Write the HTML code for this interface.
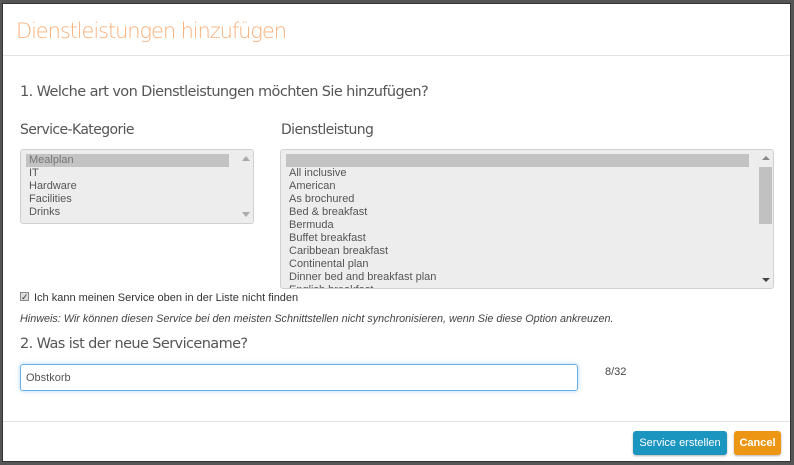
<!DOCTYPE html>
<html><head><style>
*{box-sizing:border-box;margin:0;padding:0}
body{width:794px;height:465px;background:#555;position:relative;overflow:hidden;font-family:"Liberation Sans",sans-serif}
.modal{position:absolute;left:2px;top:3px;width:789px;height:459px;background:#fff;border:1px solid #333}
.t{position:absolute;left:13px;top:15px;font-size:21px;color:#f8b07a;font-family:"DejaVu Sans","Liberation Sans",sans-serif;font-weight:300;letter-spacing:-1.1px}
.hl{position:absolute;left:0;right:0;height:1px;background:#e2e2e2}
.q{position:absolute;font-family:"DejaVu Sans","Liberation Sans",sans-serif;color:#555;font-size:14px;letter-spacing:-0.6px}
.box{position:absolute;background:#ededed;border:1px solid #d0d0d0;border-radius:3px;overflow:hidden;font-size:11px;color:#555;line-height:13px}
.box .sel{background:#c3c3c3;height:13px}
.it{padding-left:3px}
.sb{position:absolute;right:0;top:0;bottom:0;width:16px;background:#ededed}
.ar{position:absolute;left:5px;width:0;height:0;border-left:4px solid transparent;border-right:4px solid transparent}
</style></head><body>
<div class="modal">
<div class="t">Dienstleistungen hinzufügen</div>
<div class="hl" style="top:51px"></div>
<div class="q" style="left:17px;top:80px;font-size:14.5px">1. Welche art von Dienstleistungen möchten Sie hinzufügen?</div>
<div class="q" style="left:17px;top:118px">Service-Kategorie</div>
<div class="q" style="left:278px;top:118px">Dienstleistung</div>
<div class="box" style="left:17px;top:145px;width:234px;height:75px;padding:4px 24px 0 5px">
<div class="sel it" style="color:#777">Mealplan</div><div class="it">IT</div><div class="it">Hardware</div><div class="it">Facilities</div><div class="it">Drinks</div>
<div class="sb"><div class="ar" style="top:6px;border-bottom:5px solid #aaa"></div><div class="ar" style="bottom:6px;border-top:5px solid #aaa"></div></div>
</div>
<div class="box" style="left:277px;top:145px;width:494px;height:140px;padding:4px 24px 0 5px">
<div class="sel"></div>
<div class="it">All inclusive</div><div class="it">American</div><div class="it">As brochured</div><div class="it">Bed &amp; breakfast</div><div class="it">Bermuda</div><div class="it">Buffet breakfast</div><div class="it">Caribbean breakfast</div><div class="it">Continental plan</div><div class="it">Dinner bed and breakfast plan</div><div class="it">English breakfast</div>
<div class="sb"><div class="ar" style="top:6px;border-bottom:4px solid #888"></div><div style="position:absolute;left:2px;top:17px;width:13px;height:57px;background:#c1c1c1"></div><div class="ar" style="bottom:6px;border-top:4px solid #444"></div></div>
</div>
<div style="position:absolute;left:17px;top:288px;width:9px;height:9px;border:1px solid #888;background:#ddd;font-size:9px;line-height:8px;color:#333">✓</div>
<div style="position:absolute;left:31px;top:288px;font-size:11px;color:#333">Ich kann meinen Service oben in der Liste nicht finden</div>
<div style="position:absolute;left:17px;top:309px;font-size:10.8px;color:#444;font-style:italic">Hinweis: Wir können diesen Service bei den meisten Schnittstellen nicht synchronisieren, wenn Sie diese Option ankreuzen.</div>
<div class="q" style="left:17px;top:332px;font-size:14.5px">2. Was ist der neue Servicename?</div>
<div style="position:absolute;left:17px;top:360px;width:558px;height:27px;border:1px solid #66afe9;border-radius:3px;box-shadow:0 0 5px rgba(102,175,233,.5);font-size:11px;color:#555;padding:7px 5px">Obstkorb</div>
<div style="position:absolute;left:602px;top:362px;font-size:11px;color:#444">8/32</div>
<div class="hl" style="top:417px"></div>
<div style="position:absolute;left:630px;top:427px;width:94px;height:24px;background:#1a95c0;border-radius:3px;color:#fff;font-size:11px;text-align:center;line-height:24px;box-shadow:0 1px 2px rgba(0,0,0,.3)">Service erstellen</div>
<div style="position:absolute;left:731px;top:427px;width:47px;height:24px;background:#ec9614;border-radius:3px;color:#fff;font-size:11px;font-weight:bold;text-align:center;line-height:24px;box-shadow:0 1px 2px rgba(0,0,0,.3)">Cancel</div>
</div>
</body></html>
